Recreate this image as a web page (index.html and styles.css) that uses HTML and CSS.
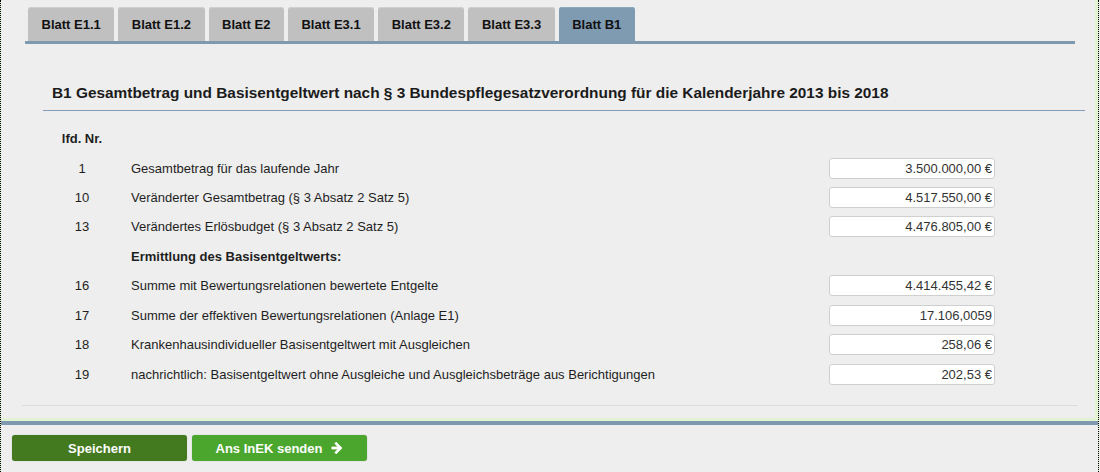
FILE: index.html
```html
<!DOCTYPE html>
<html lang="de">
<head>
<meta charset="utf-8">
<title>Blatt B1</title>
<link rel="stylesheet" href="styles.css">
</head>
<body>
<div class="frame">
  <div class="panel">
    <div class="tabs">
      <div class="tab">Blatt E1.1</div>
      <div class="tab">Blatt E1.2</div>
      <div class="tab">Blatt E2</div>
      <div class="tab">Blatt E3.1</div>
      <div class="tab">Blatt E3.2</div>
      <div class="tab">Blatt E3.3</div>
      <div class="tab active">Blatt B1</div>
    </div>
    <h1 class="title">B1 Gesamtbetrag und Basisentgeltwert nach § 3 Bundespflegesatzverordnung für die Kalenderjahre 2013 bis 2018</h1>
    <div class="rows">
      <div class="row head"><span class="nr">lfd. Nr.</span></div>
      <div class="row"><span class="nr">1</span><span class="label">Gesamtbetrag für das laufende Jahr</span><input class="field" type="text" value="3.500.000,00 €" readonly></div>
      <div class="row"><span class="nr">10</span><span class="label">Veränderter Gesamtbetrag (§ 3 Absatz 2 Satz 5)</span><input class="field" type="text" value="4.517.550,00 €" readonly></div>
      <div class="row"><span class="nr">13</span><span class="label">Verändertes Erlösbudget (§ 3 Absatz 2 Satz 5)</span><input class="field" type="text" value="4.476.805,00 €" readonly></div>
      <div class="row"><span class="nr"></span><span class="label strong">Ermittlung des Basisentgeltwerts:</span></div>
      <div class="row"><span class="nr">16</span><span class="label">Summe mit Bewertungsrelationen bewertete Entgelte</span><input class="field" type="text" value="4.414.455,42 €" readonly></div>
      <div class="row"><span class="nr">17</span><span class="label">Summe der effektiven Bewertungsrelationen (Anlage E1)</span><input class="field" type="text" value="17.106,0059" readonly></div>
      <div class="row"><span class="nr">18</span><span class="label">Krankenhausindividueller Basisentgeltwert mit Ausgleichen</span><input class="field" type="text" value="258,06 €" readonly></div>
      <div class="row"><span class="nr">19</span><span class="label">nachrichtlich: Basisentgeltwert ohne Ausgleiche und Ausgleichsbeträge aus Berichtigungen</span><input class="field" type="text" value="202,53 €" readonly></div>
    </div>
    <div class="sep"></div>
  </div>
  <div class="bluebar"></div>
  <div class="footer">
    <button class="btn save" type="button">Speichern</button>
    <button class="btn send" type="button">Ans InEK senden
      <svg class="arrow" viewBox="0 0 12 12" width="12" height="12" aria-hidden="true">
        <rect x="0.5" y="4.6" width="7.5" height="2.8" fill="#fff"/>
        <path d="M5.2 1.6 L9.6 6 L5.2 10.4" fill="none" stroke="#fff" stroke-width="2.6" stroke-linecap="square" stroke-linejoin="miter"/>
      </svg>
    </button>
  </div>
</div>
</body>
</html>
```
FILE: styles.css
```css
html, body {
  margin: 0;
  padding: 0;
  background: #eeeeee;
}
body {
  font-family: "Liberation Sans", Arial, sans-serif;
  font-size: 13px;
  color: #1e1e1e;
}
.frame {
  width: 1097px;
  height: 472px;
  border-left: 1px dotted #000;
  border-right: 1px dotted #000;
  background: #d8efc3;
  display: flex;
  flex-direction: column;
}
.panel {
  background: #eeeeee;
  border-right: 3px solid #e2f3d3;
  border-bottom: 3px solid #e2f3d3;
  height: 418px;
  display: flex;
  flex-direction: column;
}
.tabs {
  display: flex;
  gap: 4px;
  margin: 7px 20px 0 24px;
  padding-left: 3px;
  border-bottom: 3px solid #7f9aae;
  height: 34px;
}
.tab {
  height: 34px;
  padding: 0 13.5px;
  background: #c0c0c0;
  border-radius: 3px 3px 0 0;
  box-shadow: inset 0 1px 0 #d0d0d0;
  font-weight: bold;
  font-size: 13px;
  color: #111;
  display: flex;
  align-items: center;
  box-sizing: border-box;
}
.tab.active {
  background: #7f9bb1;
  box-shadow: inset 0 1px 0 #8ea8bb;
}
.title {
  margin: 40px 10px 0 42px;
  padding: 0 0 8px 9px;
  border-bottom: 1px solid #819eb6;
  font-size: 15.4px;
  line-height: 18px;
  font-weight: bold;
  color: #1b1b1b;
}
.rows {
  margin: 13px 0 0 51px;
  width: 943px;
}
.row {
  display: grid;
  grid-template-columns: 60px 1fr 166px;
  column-gap: 19px;
  align-items: center;
  height: 29.43px;
}
.nr {
  text-align: center;
}
.head .nr {
  font-weight: bold;
}
.label.strong {
  font-weight: bold;
}
.field {
  box-sizing: border-box;
  width: 166px;
  height: 21px;
  border: 1px solid #cfcfcf;
  border-radius: 3px;
  background: #fff;
  text-align: right;
  padding: 0 2px 0 4px;
  font-family: "Liberation Sans", Arial, sans-serif;
  font-size: 13px;
  color: #333;
  outline: none;
}
.sep {
  margin: 16px 0 0 21px;
  width: 1056px;
  border-top: 1px solid #dcdcdc;
}
.bluebar {
  height: 4px;
  background: #7f9ab0;
}
.footer {
  flex: 1;
  background: #eeeeee;
  display: flex;
  gap: 5px;
  padding: 10px 0 0 11px;
}
.btn {
  width: 175px;
  height: 26px;
  border: none;
  border-radius: 3px;
  color: #fff;
  font-family: "Liberation Sans", Arial, sans-serif;
  font-weight: bold;
  font-size: 13px;
  box-shadow: 0 0 1px rgba(0,0,0,0.35);
  display: flex;
  align-items: center;
  justify-content: center;
  gap: 9px;
  padding: 0;
}
.save {
  background: #447a1f;
}
.send {
  background: #4ba62e;
}
.arrow {
  display: block;
}
```
